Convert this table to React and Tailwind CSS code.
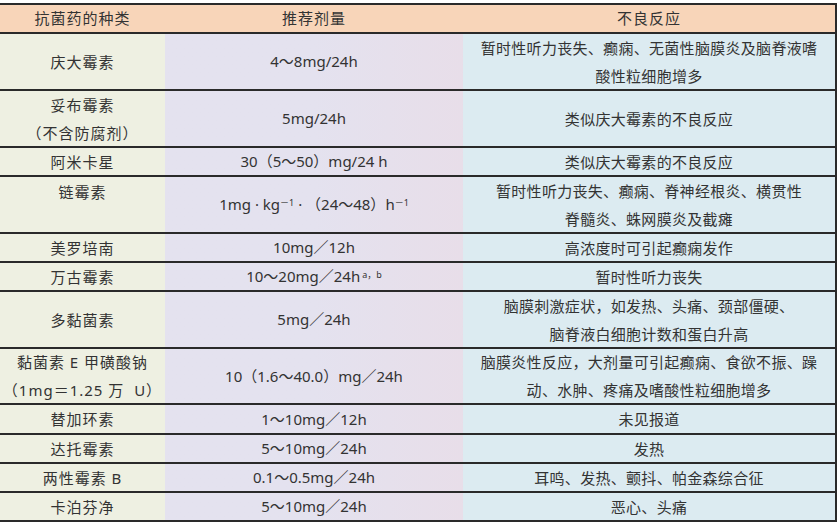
const rows = [
  { h: 57, name: ['庆大霉素'], dose: '4～8mg/24h', effect: ['暂时性听力丧失、癫痫、无菌性脑膜炎及脑脊液嗜', '酸性粒细胞增多'] },
  { h: 57, name: ['妥布霉素', '（不含防腐剂）'], dose: '5mg/24h', effect: ['类似庆大霉素的不良反应'] },
  { h: 29, name: ['阿米卡星'], dose: '30（5～50）mg/24 h', effect: ['类似庆大霉素的不良反应'] },
  {
    h: 57,
    name: ['链霉素'],
    top: true,
    dose: (
      <>
        1mg · kg<sup className="text-[9px]">－1</sup> · （24～48）h<sup className="text-[9px]">－1</sup>
      </>
    ),
    effect: ['暂时性听力丧失、癫痫、脊神经根炎、横贯性', '脊髓炎、蛛网膜炎及截瘫'],
  },
  { h: 29, name: ['美罗培南'], dose: '10mg／12h', effect: ['高浓度时可引起癫痫发作'] },
  {
    h: 29,
    name: ['万古霉素'],
    dose: (
      <>
        10～20mg／24h<sup className="text-[9px] ml-0.5">a，b</sup>
      </>
    ),
    effect: ['暂时性听力丧失'],
  },
  { h: 57, name: ['多黏菌素'], dose: '5mg／24h', effect: ['脑膜刺激症状，如发热、头痛、颈部僵硬、', '脑脊液白细胞计数和蛋白升高'] },
  { h: 56, name: ['黏菌素 E 甲磺酸钠', '（1mg＝1.25 万  U）'], dose: '10（1.6～40.0）mg／24h', effect: ['脑膜炎性反应，大剂量可引起癫痫、食欲不振、躁', '动、水肿、疼痛及嗜酸性粒细胞增多'] },
  { h: 30, name: ['替加环素'], dose: '1～10mg／12h', effect: ['未见报道'] },
  { h: 29, name: ['达托霉素'], dose: '5～10mg／24h', effect: ['发热'] },
  { h: 29, name: ['两性霉素 B'], dose: '0.1～0.5mg／24h', effect: ['耳鸣、发热、颤抖、帕金森综合征'] },
  { h: 29, name: ['卡泊芬净'], dose: '5～10mg／24h', effect: ['恶心、头痛'] },
];

export default function App() {
  return (
    <div className="w-[840px] h-[526px] bg-white pt-[3px] text-[#333] text-[15px]" style={{ fontFamily: '"Noto Sans", "Noto Sans CJK SC", sans-serif' }}>
      <div className="w-[837px] border-t-2 border-r-2 border-[#2a2a2a]">
        <div className="flex h-[29px] border-b-2 border-[#2a2a2a] bg-[#f8d5b9] items-center leading-none">
          <div className="w-[165px] text-center tracking-[1px]">抗菌药的种类</div>
          <div className="w-[298px] text-center tracking-[1px]">推荐剂量</div>
          <div className="flex-1 text-center tracking-[1px]">不良反应</div>
        </div>
        {rows.map((r, i) => (
          <div key={i} className="flex border-b-2 border-[#2a2a2a]" style={{ height: r.h }}>
            <div className={`w-[165px] bg-[#eef0e2] flex flex-col items-center tracking-[1px] leading-[28px] ${r.top ? 'justify-start pt-[1px]' : 'justify-center'}`}>
              {r.name.map((t, j) => (
                <div key={j} className="whitespace-pre">{t}</div>
              ))}
            </div>
            <div className="w-[298px] bg-gradient-to-r from-[#e4e2ef] via-[#e4e2ef] to-[#e8dee9] flex items-center justify-center">
              <span>{r.dose}</span>
            </div>
            <div className="flex-1 bg-[#dcebf1] flex flex-col items-center justify-center leading-[28px] tracking-[0.3px]">
              {r.effect.map((t, j) => (
                <div key={j}>{t}</div>
              ))}
            </div>
          </div>
        ))}
      </div>
    </div>
  );
}
